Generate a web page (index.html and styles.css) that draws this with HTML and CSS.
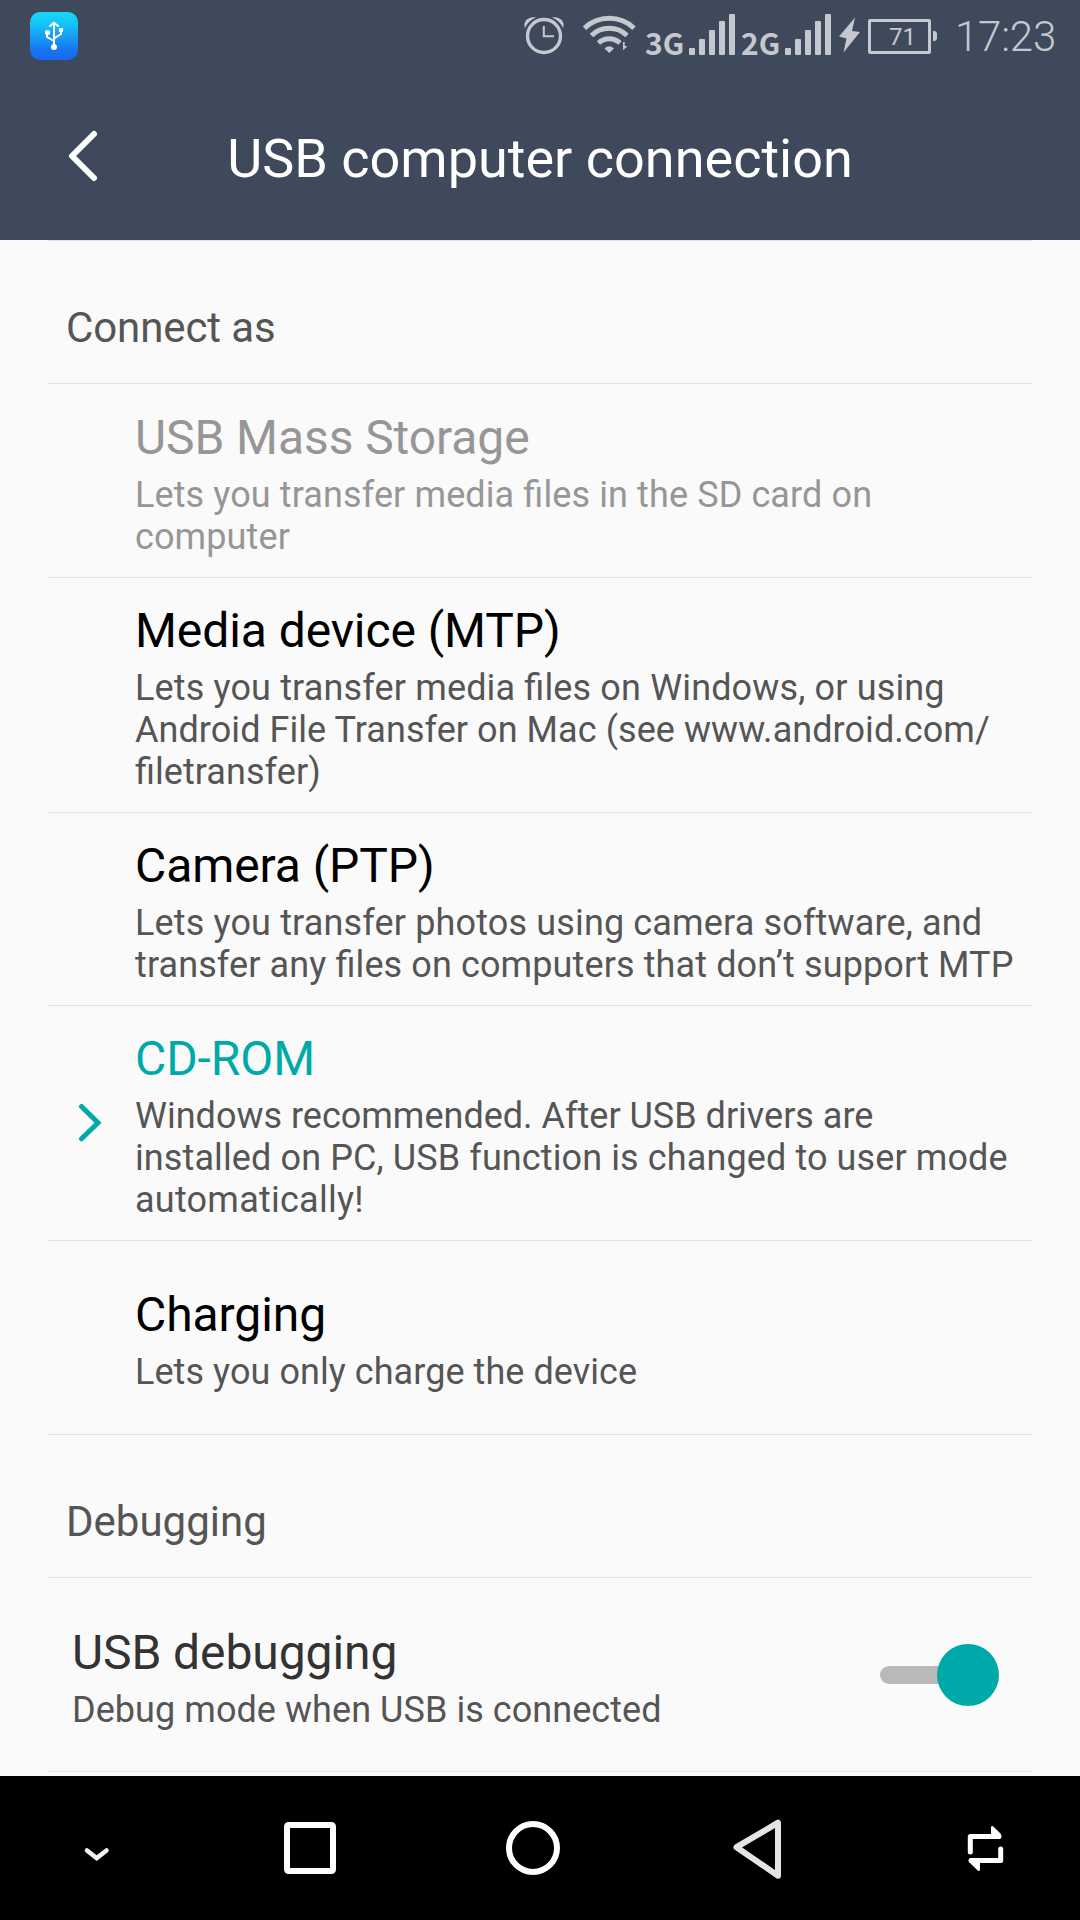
FILE: index.html
```html
<!DOCTYPE html>
<html lang="en">
<head>
<meta charset="utf-8">
<title>USB computer connection</title>
<link rel="stylesheet" href="styles.css">
</head>
<body>
<div class="screen">
  <header class="header">
    <div class="status">
      <svg class="app-icon" width="48" height="48" viewBox="30 12 48 48">
        <defs><linearGradient id="g" x1="0" y1="0" x2="0" y2="1"><stop offset="0" stop-color="#17daf8"/><stop offset=".25" stop-color="#15c4f7"/><stop offset=".8" stop-color="#1774f0"/><stop offset="1" stop-color="#1a66ee"/></linearGradient></defs>
        <rect x="30" y="12" width="48" height="48" rx="10" fill="url(#g)"/>
        <g fill="none" stroke="#fff" stroke-width="2"><path d="M54 23v24M49.300 26.500L54 22.700l4.700 3.800M54 41l-7-4v-4M54 38.500l7-4.500v-3"/></g>
        <circle cx="54" cy="47" r="3" fill="#fff"/><circle cx="47.500" cy="32.500" r="2.600" fill="#fff"/><path fill="#fff" d="M59 28h4v4h-4z"/>
      </svg>
      <svg class="alarm" width="42" height="72" viewBox="523 0 42 72">
        <circle cx="544" cy="36" r="16.500" fill="none" stroke="#c5c9cf" stroke-width="3.400"/>
        <path d="M543.800 26v10.200h10.200" fill="none" stroke="#c5c9cf" stroke-width="2"/>
        <path d="M525 28c-2.500-6 3-12.500 11-10.500q-7.500 3-11 10.500zM563 28c2.500-6-3-12.500-11-10.500q7.500 3 11 10.500z" fill="#c5c9cf"/>
      </svg>
      <svg class="wifi" width="56" height="72" viewBox="582 0 56 72">
        <g fill="none" stroke="#c5c9cf" stroke-width="5"><path d="M584.500 28.200a36 36 0 0 1 49.500 0"/><path d="M591.500 35.500a25.500 25.500 0 0 1 35.500 0"/><path d="M598.500 43a15.500 15.500 0 0 1 21.500 0"/></g>
        <path d="M604.500 48.500q4.800-4.500 9.500 0l-4.700 4.500zM623 42v8.300l4.500-4-2.800-.3V42z" fill="#c5c9cf"/>
      </svg>
      <span class="net net-a">3G</span>
      <svg class="bars bars-a" width="46" height="72" viewBox="689 0 46 72" fill="#c5c9cf"><rect x="689" y="48" width="6" height="7" rx="1"/><rect x="699" y="39" width="6" height="16" rx="1"/><rect x="709" y="30" width="6" height="25" rx="1"/><rect x="719" y="21" width="6" height="34" rx="1"/><rect x="729" y="14" width="6" height="41" rx="1"/></svg>
      <span class="net net-b">2G</span>
      <svg class="bars bars-b" width="46" height="72" viewBox="689 0 46 72" fill="#c5c9cf"><rect x="689" y="48" width="6" height="7" rx="1"/><rect x="699" y="39" width="6" height="16" rx="1"/><rect x="709" y="30" width="6" height="25" rx="1"/><rect x="719" y="21" width="6" height="34" rx="1"/><rect x="729" y="14" width="6" height="41" rx="1"/></svg>
      <svg class="bolt" width="21" height="72" viewBox="839 0 21 72"><path d="M855 17.500L839 36.500l7.500 2L843.500 52.500 860 32l-8-1z" fill="#c5c9cf"/></svg>
      <div class="battery"><span>71</span></div>
      <div class="battery-tip"></div>
      <time class="clock">17:23</time>
    </div>
    <div class="titlebar">
      <svg class="back" width="32" height="52" viewBox="67 130 32 52"><path d="M94 134L72 156l22 22" fill="none" stroke="#fff" stroke-width="6" stroke-linecap="round" stroke-linejoin="round"/></svg>
      <h1>USB computer connection</h1>
    </div>
  </header>
  <main class="content">
    <h2 class="section first">Connect as</h2>
    <div class="item disabled"><h3>USB Mass Storage</h3><p><span class="wide">Lets you transfer media files in the SD card on</span><span class="wide">computer</span></p></div>
    <div class="item tall"><h3>Media device (MTP)</h3><p><span class="wider">Lets you transfer media files on Windows, or using</span><span class="slight">Android File Transfer on Mac (see www.android.com/</span><span class="slight">filetransfer)</span></p></div>
    <div class="item camera"><h3>Camera (PTP)</h3><p><span class="wider">Lets you transfer photos using camera software, and</span><span class="wide">transfer any files on computers that don’t support MTP</span></p></div>
    <div class="item tall selected">
      <svg class="mark" width="24" height="40" viewBox="78 1103 24 40"><path d="M81.500 1106.500L98 1122.700l-16.500 16" fill="none" stroke="#00a9a9" stroke-width="5" stroke-linecap="round" stroke-linejoin="miter"/></svg>
      <div><h3>CD-ROM</h3><p><span>Windows recommended. After USB drivers are</span><span class="wide">installed on PC, USB function is changed to user mode</span><span class="widest">automatically!</span></p></div>
    </div>
    <div class="item single"><h3>Charging</h3><p><span class="slight">Lets you only charge the device</span></p></div>
    <h2 class="section">Debugging</h2>
    <div class="item debug">
      <div><h3>USB debugging</h3><p><span class="slight">Debug mode when USB is connected</span></p></div>
      <div class="toggle"><i class="knob"></i></div>
    </div>
  </main>
  <nav class="nav">
    <svg width="30" height="144" viewBox="82 1776 30 144"><path d="M87 1850.500l9.700 7.500 9.800-7.500" fill="none" stroke="#f2f2f2" stroke-width="4.600" stroke-linecap="round"/></svg>
    <svg width="54" height="144" viewBox="283 1776 54 144"><rect x="287" y="1825" width="46" height="46" rx="1.500" fill="none" stroke="#fff" stroke-width="6"/></svg>
    <svg width="58" height="144" viewBox="504 1776 58 144"><circle cx="533" cy="1848" r="24" fill="none" stroke="#fff" stroke-width="6"/></svg>
    <svg width="52" height="144" viewBox="731 1776 52 144"><path d="M778 1823.500v53L736.500 1848z" transform="translate(0 -.8)" fill="none" stroke="#e5e5e5" stroke-width="6" stroke-linejoin="round"/></svg>
    <svg width="38" height="144" viewBox="966 1776 38 144"><path d="M970.300 1852V1836.500H999M1000.700 1849V1860.500H971" fill="none" stroke="#fff" stroke-width="5" stroke-linecap="round" stroke-linejoin="round"/><path d="M991 1839v-12.500l1.800-.5 8.200 8-1 5zM980 1858v12.500l-1.800.5-9.200-9 1-4z" fill="#fff"/></svg>
  </nav>
</div>
</body>
</html>
```
FILE: styles.css
```css
* { box-sizing: border-box; margin: 0; padding: 0; }
body { font-family: Roboto, sans-serif; background: #fafafa; }
svg { display: block; flex: none; }
h1, h2, h3 { font-weight: 400; }

.screen { width: 1080px; height: 1920px; display: flex; flex-direction: column; overflow: hidden; }
.header { height: 240px; background: #3e495b; color: #fff; }

.status { height: 72px; padding-left: 30px; display: flex; align-items: flex-start; color: #c5c9cf; }
.app-icon { margin-top: 12px; }
.alarm { margin-left: 445px; }
.wifi { margin-left: 17px; }
.net { flex: none; width: 40px; font: 700 30px/40px "Noto Sans CJK SC", sans-serif; padding-top: 22px; white-space: nowrap; }
.net-a { margin-left: 7px; }
.bars-a { margin-left: 4px; }
.net-b { margin-left: 6px; }
.bars-b { margin-left: 4px; }
.bolt { margin-left: 8px; }
.battery { flex: none; width: 63px; height: 35px; margin: 19px 0 0 8px; border: 3px solid #c5c9cf; border-radius: 2px; font-size: 24px; line-height: 30px; text-align: center; padding-left: 6px; }
.battery-tip { flex: none; width: 4px; height: 10px; margin: 31px 0 0 2px; border-radius: 0 3px 3px 0; background: #c5c9cf; }
.clock { margin-left: 18px; font-size: 42px; font-weight: 300; line-height: 50px; letter-spacing: -.2px; padding-top: 12px; white-space: nowrap; }

.titlebar { height: 168px; display: grid; grid-template-columns: 67px 32px 1fr 99px; }
.back { grid-column: 2; margin-top: 58px; }
.titlebar h1 { grid-column: 3; font-size: 54px; line-height: 64px; padding-top: 55px; text-align: center; white-space: nowrap; }

.content { height: 1536px; padding: 0 48px; overflow: hidden; }
.section { height: 143px; padding: 62px 0 0 18px; font-size: 42px; line-height: 50px; color: #555; border-bottom: 1px solid #e1e1e1; }
.first { height: 144px; border-top: 1px solid #e1e1e1; letter-spacing: -.1px; }
.item { height: 194px; padding: 25px 0 0 87px; border-bottom: 1px solid #e1e1e1; white-space: nowrap; }
.item h3 { font-size: 48px; line-height: 56px; color: #000; letter-spacing: -.08px; }
.item p { margin-top: 8px; font-size: 36px; line-height: 42px; color: #555; font-feature-settings: "liga" 1; }
.item p span { display: block; }
.slight { letter-spacing: .06px; }
.wide { letter-spacing: .11px; }
.wider { letter-spacing: .15px; }
.widest { letter-spacing: .24px; }
.tall { height: 235px; }
.camera { height: 193px; }
.single { padding-top: 46px; }
.disabled { padding-top: 26px; }
.item.disabled h3, .item.disabled p { color: #969696; }
.selected { padding-left: 30px; display: flex; gap: 33px; }
.item.selected h3 { color: #00a9a9; }
.mark { margin-top: 72px; }
.debug { padding: 47px 33px 0 24px; display: flex; justify-content: space-between; }
.item.debug h3 { color: #333; }
.toggle { width: 119px; height: 62px; margin-top: 19px; display: flex; align-items: center; }
.toggle::before { content: ""; flex: 1; height: 18px; margin-right: -12px; border-radius: 9px; background: #b9b9b9; }
.knob { flex: none; width: 62px; height: 62px; border-radius: 50%; background: #00a9a9; }

.nav { height: 144px; padding: 0 76px 0 82px; background: #000; display: grid; grid-template-columns: 201px 221px 227px 235px 38px; }
```
